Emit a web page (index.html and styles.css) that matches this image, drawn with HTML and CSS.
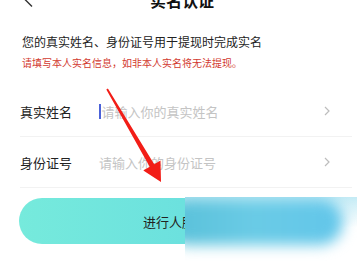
FILE: index.html
```html
<!DOCTYPE html>
<html lang="zh">
<head>
<meta charset="utf-8">
<link rel="stylesheet" href="styles.css">
</head>
<body>
<div class="page">
  <div class="header">
    <svg class="back" width="10" height="14" viewBox="0 0 10 14"><polyline points="8,0.5 1.5,7 8,13.5" fill="none" stroke="#333" stroke-width="1.4"/></svg>
    <div class="title">实名认证</div>
  </div>
  <div class="intro">
    <div class="lead">您的真实姓名、身份证号用于提现时完成实名</div>
    <div class="warn">请填写本人实名信息，如非本人实名将无法提现。</div>
  </div>
  <div class="form">
    <div class="row">
      <div class="label">真实姓名</div>
      <div class="input"><span class="cursor"></span><span class="ph">请输入你的真实姓名</span></div>
      <svg class="chev" width="6" height="10" viewBox="0 0 6 10"><polyline points="1,1 5,5 1,9" fill="none" stroke="#bdbdbd" stroke-width="1.2"/></svg>
    </div>
    <div class="row">
      <div class="label">身份证号</div>
      <div class="input"><span class="ph">请输入你的身份证号</span></div>
      <svg class="chev" width="6" height="10" viewBox="0 0 6 10"><polyline points="1,1 5,5 1,9" fill="none" stroke="#bdbdbd" stroke-width="1.2"/></svg>
    </div>
  </div>
  <div class="btnwrap">
    <div class="btn">进行人脸认证</div>
  </div>
  <div class="blur"><div class="blob"></div></div>
  <svg class="arrow" width="364" height="265" viewBox="0 0 364 265">
    <polygon points="106.3,89.4 107.9,88.4 154.2,164.2 160.5,160.4 161,182 143.3,170.6 149.7,166.8" fill="#f21d17"/>
  </svg>
</div>
</body>
</html>
```

FILE: styles.css
```css
* { box-sizing: border-box; }
html, body { margin: 0; padding: 0; background: #fff; }
body {
  font-family: "Noto Sans CJK SC", "Noto Sans", sans-serif;
  width: 364px;
  height: 265px;
  overflow: hidden;
}
.page { position: relative; width: 364px; height: 265px; overflow: hidden; }
.header {
  height: 18px;
  margin-top: -9px;
  display: flex;
  align-items: center;
  justify-content: center;
  position: relative;
}
.back { position: absolute; left: 24px; top: 2px; }
.title {
  font-size: 16px;
  font-weight: 700;
  color: #111;
  line-height: 18px;
}
.intro { padding: 0 22px; margin-top: 26px; }
.lead { font-size: 12px; line-height: 14px; color: #222; }
.warn { font-size: 10px; line-height: 12px; color: #d23a30; margin-top: 8px; }
.form { margin-top: 17px; padding: 0 12px 0 20px; }
.row {
  height: 51px;
  display: flex;
  align-items: center;
  border-bottom: 1px solid #f2f2f2;
}
.label { width: 79px; font-size: 13px; color: #222; }
.input { flex: 1; display: flex; align-items: center; font-size: 13px; }
.cursor { width: 1.5px; height: 15px; background: #4b62d8; margin-right: 1px; }
.ph { color: #c4c4c4; }
.chev { margin-right: 22px; }
.btnwrap { padding: 0 19px; margin-top: 10px; }
.btn {
  height: 46px;
  border-radius: 23px;
  background: linear-gradient(90deg, #76eadc 0%, #62d8e0 100%);
  display: flex;
  align-items: center;
  justify-content: center;
  font-size: 13px;
  color: #222;
}
.blur {
  position: absolute;
  left: 185px;
  top: 197px;
  width: 172px;
  height: 68px;
  overflow: hidden;
  background: linear-gradient(180deg, #c4ebf5 0%, #ffffff 45%);
}
.blob {
  position: absolute;
  left: -20px;
  top: 2px;
  width: 178px;
  height: 46px;
  border-radius: 23px;
  background: linear-gradient(90deg, #58c0d8 0%, #6acbe6 50%, #62c6ea 100%);
  filter: blur(7px);
}
.arrow { position: absolute; left: 0; top: 0; }
```
